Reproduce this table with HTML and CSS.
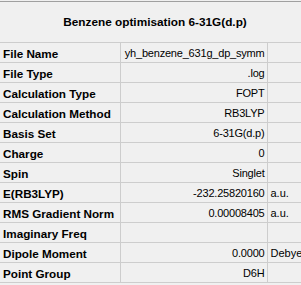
FILE: index.html
```html
<!DOCTYPE html>
<html lang="en">
<head>
  <meta charset="UTF-8" />
  <title>Summary</title>
  <link rel="stylesheet" href="styles.css">
</head>
<body>

<div id="summary">
  <div class="summary-title">Benzene optimisation 6-31G(d.p)</div>

  <table class="summary-table">
    <tbody>
      <tr><th>File Name</th><td class="val">yh_benzene_631g_dp_symm</td><td class="unit"></td></tr>
      <tr><th>File Type</th><td class="val">.log</td><td class="unit"></td></tr>
      <tr><th>Calculation Type</th><td class="val">FOPT</td><td class="unit"></td></tr>
      <tr><th>Calculation Method</th><td class="val">RB3LYP</td><td class="unit"></td></tr>
      <tr><th>Basis Set</th><td class="val">6-31G(d.p)</td><td class="unit"></td></tr>
      <tr><th>Charge</th><td class="val">0</td><td class="unit"></td></tr>
      <tr><th>Spin</th><td class="val">Singlet</td><td class="unit"></td></tr>
      <tr><th>E(RB3LYP)</th><td class="val">-232.25820160</td><td class="unit">a.u.</td></tr>
      <tr><th>RMS Gradient Norm</th><td class="val">0.00008405</td><td class="unit">a.u.</td></tr>
      <tr><th>Imaginary Freq</th><td class="val"></td><td class="unit"></td></tr>
      <tr><th>Dipole Moment</th><td class="val">0.0000</td><td class="unit">Debye</td></tr>
      <tr><th>Point Group</th><td class="val">D6H</td><td class="unit"></td></tr>
    </tbody>
  </table>
</div>

</body>
</html>
```

FILE: styles.css
```css
body {
  margin: 0;
  background-color: #f0f0f0;
  font-family: "Liberation Sans", Arial, sans-serif;
  color: #000;
  overflow: hidden;
}

#summary {
  width: 310px;
  margin-top: 1px;
  border-top: 1px solid #a0a0a0;
}

.summary-title {
  height: 40px;
  line-height: 40px;
  text-align: center;
  font-weight: bold;
  font-size: 11.8px;
}

.summary-table {
  width: 310px;
  border-collapse: collapse;
  table-layout: fixed;
  border-top: 1px solid #cdcdcd;
}

.summary-table th,
.summary-table td {
  height: 19px;
  padding: 1px 0 0 0;
  border-bottom: 1px solid #cdcdcd;
  white-space: nowrap;
  overflow: hidden;
  box-sizing: border-box;
}

.summary-table tr {
  height: 20px;
}

.summary-table th {
  width: 120px;
  text-align: left;
  padding-left: 3px;
  font-size: 11.7px;
  font-weight: bold;
  border-right: 1px solid #cdcdcd;
}

.summary-table .val {
  width: 147px;
  text-align: right;
  padding-right: 2px;
  font-size: 11px;
  letter-spacing: -0.2px;
  border-right: 1px solid #cdcdcd;
}

.summary-table .unit {
  padding-left: 3px;
  font-size: 11px;
}
```
